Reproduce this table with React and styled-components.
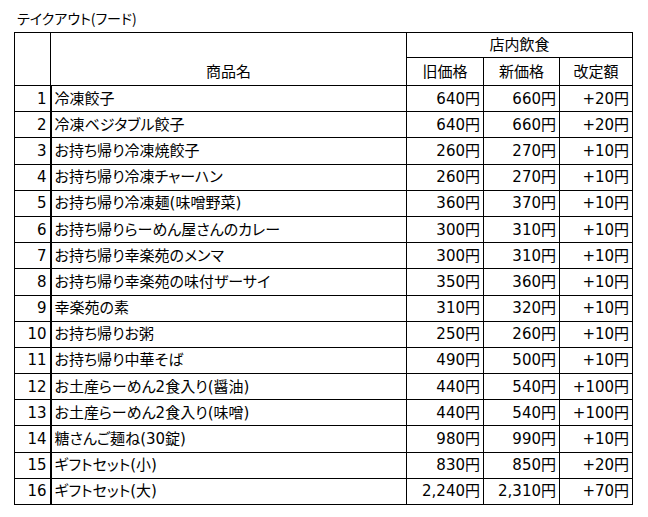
import React from "react";
import styled, { createGlobalStyle } from "styled-components";

const GlobalStyle = createGlobalStyle`
  html, body {
    margin: 0;
    padding: 0;
    background: #ffffff;
  }
  body {
    font-family: "Noto Sans CJK JP", "Noto Sans", sans-serif;
    color: #000;
  }
`;

const Page = styled.div`
  padding: 9px 0 0 14px;
`;

const Title = styled.div`
  font-size: 14px;
  line-height: 18px;
  height: 23px;
  padding-left: 3px;
  font-feature-settings: "palt";
`;

const Table = styled.table`
  border-collapse: collapse;
  table-layout: fixed;
  width: 619px;
  font-size: 15px;
  font-family: "DejaVu Sans", "Noto Sans CJK JP", sans-serif;
  font-feature-settings: "palt";
`;

const HeadCell = styled.th`
  font-weight: normal;
  border: 1px solid #000;
  padding: 0 3px;
  text-align: center;
  vertical-align: ${(p) => (p.$bottom ? "bottom" : "middle")};
  padding-bottom: ${(p) => (p.$bottom ? "3px" : "0")};
  line-height: 20px;
`;

const HeadRow = styled.tr`
  height: ${(p) => p.$h}px;
`;

const Row = styled.tr`
  height: 26.2px;
`;

const Cell = styled.td`
  border: 1px solid #000;
  padding: 0 3px;
  text-align: ${(p) => (p.$left ? "left" : "right")};
  white-space: nowrap;
  line-height: 20px;
  ${(p) => p.$thick && "border-right: 2px solid #000;"}
`;

const items = [
  ["冷凍餃子", "640円", "660円", "+20円"],
  ["冷凍ベジタブル餃子", "640円", "660円", "+20円"],
  ["お持ち帰り冷凍焼餃子", "260円", "270円", "+10円"],
  ["お持ち帰り冷凍チャーハン", "260円", "270円", "+10円"],
  ["お持ち帰り冷凍麺(味噌野菜)", "360円", "370円", "+10円"],
  ["お持ち帰りらーめん屋さんのカレー", "300円", "310円", "+10円"],
  ["お持ち帰り幸楽苑のメンマ", "300円", "310円", "+10円"],
  ["お持ち帰り幸楽苑の味付ザーサイ", "350円", "360円", "+10円"],
  ["幸楽苑の素", "310円", "320円", "+10円"],
  ["お持ち帰りお粥", "250円", "260円", "+10円"],
  ["お持ち帰り中華そば", "490円", "500円", "+10円"],
  ["お土産らーめん2食入り(醤油)", "440円", "540円", "+100円"],
  ["お土産らーめん2食入り(味噌)", "440円", "540円", "+100円"],
  ["糖さんご麺ね(30錠)", "980円", "990円", "+10円"],
  ["ギフトセット(小)", "830円", "850円", "+20円"],
  ["ギフトセット(大)", "2,240円", "2,310円", "+70円"],
];

const App = () => (
  <Page>
    <GlobalStyle />
    <Title>テイクアウト(フード)</Title>
    <Table>
      <colgroup>
        <col style={{ width: 36 }} />
        <col style={{ width: 356 }} />
        <col style={{ width: 77 }} />
        <col style={{ width: 76 }} />
        <col style={{ width: 73 }} />
      </colgroup>
      <thead>
        <HeadRow $h={25}>
          <HeadCell rowSpan={2} />
          <HeadCell rowSpan={2} $bottom>
            商品名
          </HeadCell>
          <HeadCell colSpan={3}>店内飲食</HeadCell>
        </HeadRow>
        <HeadRow $h={28}>
          <HeadCell>旧価格</HeadCell>
          <HeadCell>新価格</HeadCell>
          <HeadCell>改定額</HeadCell>
        </HeadRow>
      </thead>
      <tbody>
        {items.map((item, index) => (
          <Row key={item[0]}>
            <Cell $thick>{index + 1}</Cell>
            <Cell $left>{item[0]}</Cell>
            <Cell>{item[1]}</Cell>
            <Cell>{item[2]}</Cell>
            <Cell>{item[3]}</Cell>
          </Row>
        ))}
      </tbody>
    </Table>
  </Page>
);

export default App;
